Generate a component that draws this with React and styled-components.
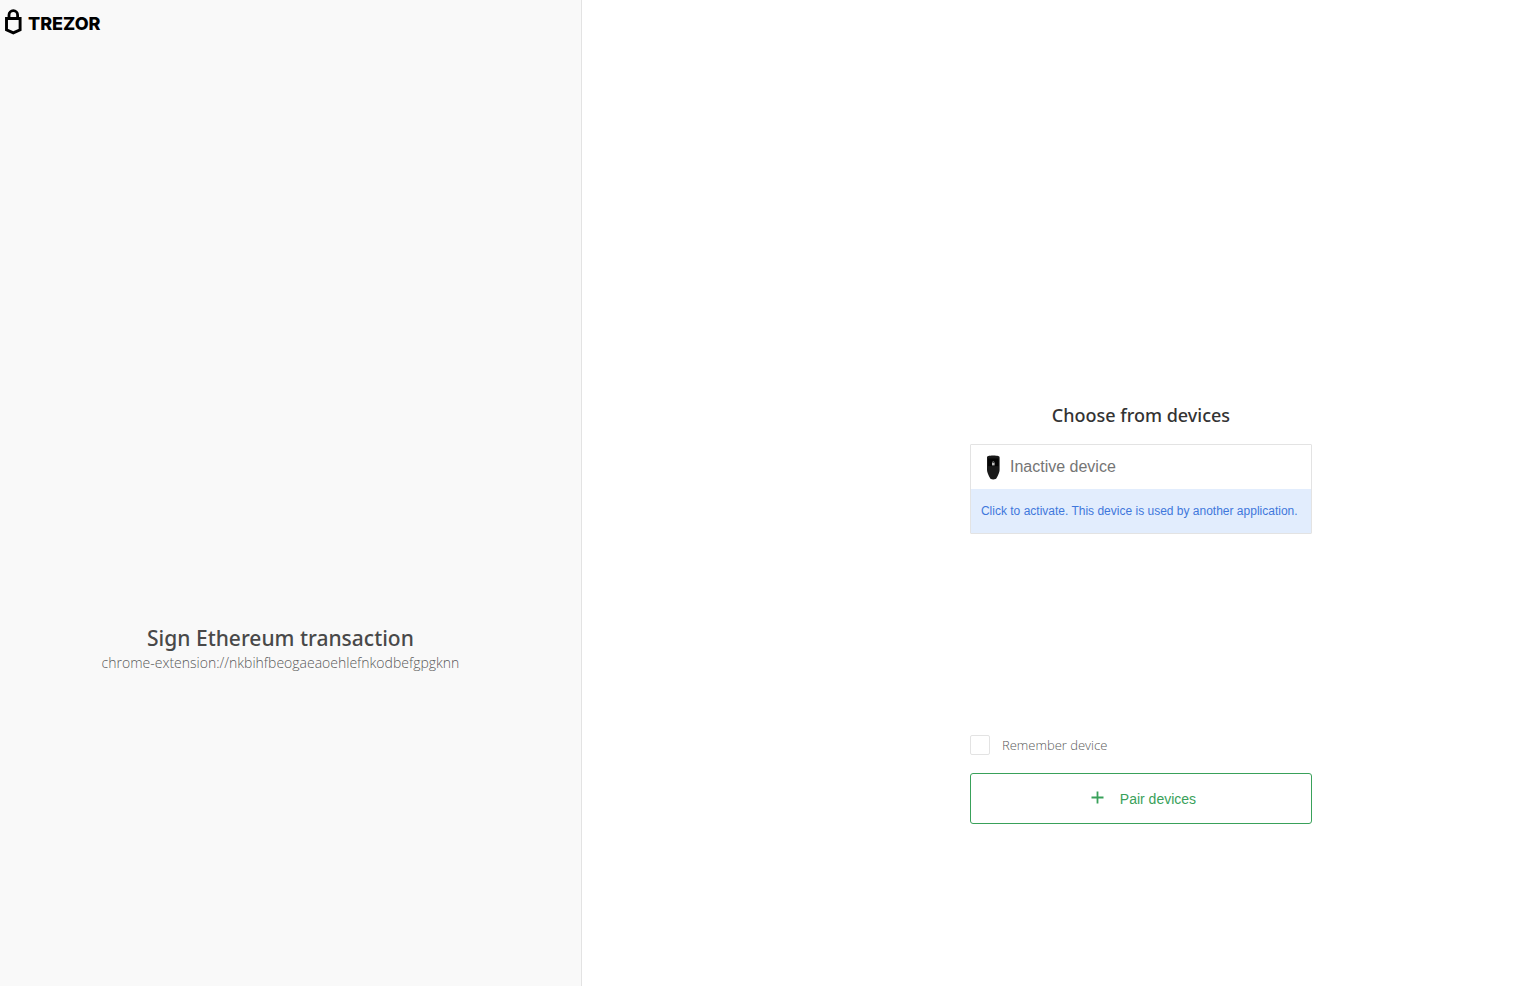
import React, { useState } from 'react';
import styled, { createGlobalStyle, ThemeProvider } from 'styled-components';

const theme = {
  colors: {
    sidebar: '#f9f9f9',
    border: '#e3e3e3',
    heading: '#333333',
    title: '#494949',
    muted: '#757575',
    light: '#5a5a5a',
    green: '#39a15a',
    info: '#3f78dc',
    infoBackground: '#e2edfd',
  },
  fonts: {
    heading: '"Noto Sans", "Open Sans", sans-serif',
    light: '"Open Sans", "Noto Sans", sans-serif',
    body: '"Liberation Sans", Arial, sans-serif',
    logo: 'Inter, sans-serif',
  },
};

const GlobalStyle = createGlobalStyle`
  * {
    box-sizing: border-box;
  }

  body {
    margin: 0;
    background: #ffffff;
    font-family: ${props => props.theme.fonts.body};
  }

  h1, h2, p {
    margin: 0;
  }
`;

const Page = styled.div`
  display: grid;
  grid-template-columns: 28fr 46fr;
  min-height: 100vh;

  @media (max-width: 768px) {
    grid-template-columns: 1fr;
  }
`;

const Sidebar = styled.aside`
  display: flex;
  flex-direction: column;
  background: ${props => props.theme.colors.sidebar};
  border-right: 1px solid ${props => props.theme.colors.border};
`;

const Logo = styled.a`
  display: flex;
  align-items: center;
  align-self: flex-start;
  gap: 6px;
  padding: 9px 0 7px 5px;
  color: #000000;
  font-family: ${props => props.theme.fonts.logo};
  font-size: 18px;
  font-weight: 800;
  line-height: 28px;
  text-decoration: none;

  svg {
    display: block;
    margin-bottom: 4px;
  }
`;

const Operation = styled.div`
  flex: 1;
  display: flex;
  flex-direction: column;
  align-items: center;
  justify-content: center;
  padding: 268px 20px 0 0;
  text-align: center;
`;

const OperationTitle = styled.h1`
  color: ${props => props.theme.colors.title};
  font-family: ${props => props.theme.fonts.heading};
  font-size: 21px;
  font-weight: 500;
  line-height: 26px;
`;

const Origin = styled.p`
  color: ${props => props.theme.colors.light};
  font-family: ${props => props.theme.fonts.light};
  font-size: 14px;
  font-weight: 300;
  line-height: 24px;
`;

const Main = styled.main`
  display: flex;
  align-items: center;
  justify-content: center;
  padding: 240px 0 0 162px;

  @media (max-width: 768px) {
    padding: 40px 20px;
  }
`;

const DevicePicker = styled.section`
  width: 100%;
  max-width: 342px;
`;

const PickerTitle = styled.h2`
  margin-bottom: 16px;
  color: ${props => props.theme.colors.heading};
  font-family: ${props => props.theme.fonts.heading};
  font-size: 18px;
  font-weight: 500;
  line-height: 26px;
  text-align: center;
`;

const DeviceList = styled.div`
  min-height: 291px;
`;

const DeviceButton = styled.button`
  display: block;
  width: 100%;
  padding: 0;
  background: #ffffff;
  border: 1px solid ${props => props.theme.colors.border};
  border-radius: 1px;
  font-family: inherit;
  text-align: left;
  cursor: pointer;
`;

const DeviceName = styled.span`
  display: flex;
  align-items: center;
  gap: 10px;
  height: 44px;
  padding-left: 15px;
  color: ${props => props.theme.colors.muted};
  font-size: 16px;
`;

const DeviceNote = styled.span`
  display: block;
  padding: 0 10px;
  background: ${props => props.theme.colors.infoBackground};
  color: ${props => props.theme.colors.info};
  font-size: 12px;
  line-height: 44px;
`;

const RememberLabel = styled.label`
  display: flex;
  align-items: center;
  gap: 12px;
  margin-bottom: 18px;
  color: ${props => props.theme.colors.light};
  font-family: ${props => props.theme.fonts.light};
  font-size: 13px;
  font-weight: 300;
  line-height: 20px;
  cursor: pointer;
`;

const Checkbox = styled.input`
  appearance: none;
  width: 20px;
  height: 20px;
  margin: 0;
  background: #ffffff;
  border: 1px solid ${props => props.theme.colors.border};
  border-radius: 2px;
  cursor: pointer;

  &:checked {
    background: ${props => props.theme.colors.green};
    border-color: ${props => props.theme.colors.green};
  }
`;

const PairButton = styled.button`
  display: flex;
  align-items: center;
  justify-content: center;
  gap: 16px;
  width: 100%;
  height: 51px;
  padding: 0 0 0 5px;
  background: #ffffff;
  border: 1px solid ${props => props.theme.colors.green};
  border-radius: 3px;
  color: ${props => props.theme.colors.green};
  font-family: inherit;
  font-size: 14px;
  cursor: pointer;
`;

const LockIcon = () => (
  <svg width="17" height="26" viewBox="0 0 17 26" fill="none" stroke="currentColor" aria-hidden="true">
    <path d="M4 9V6a4.3 4.3 0 0 1 8.6 0v3" strokeWidth="2.8" />
    <path d="M1.5 9.5h13.6v11.2l-6.8 3.1-6.8-3.1z" strokeWidth="2.9" />
  </svg>
);

const DeviceIcon = () => (
  <svg width="14" height="25" viewBox="0 0 14 25" aria-hidden="true">
    <path
      d="M1 2.4C1 1.2 2.6.5 7.2.5s6.4.7 6.4 1.9V15c0 2.2-1.5 5.4-3 8-.6 1-1.4 1.4-3.4 1.4S4.500 24 4 23c-1.500-2.600-3-5.800-3-8z"
      fill="#191919"
    />
    <path d="M2 3.500h10.500v7.600H2z" fill="#050505" />
    <path d="M6 7.800h2.600v2.600H6z" fill="#c0c0c0" />
    <path d="M6.500 8v-.7a.8.8 0 0 1 1.600 0V8" fill="none" stroke="#a0a0a0" strokeWidth=".6" />
  </svg>
);

const PlusIcon = () => (
  <svg width="13" height="16" viewBox="0 0 13 16" fill="none" stroke="currentColor" aria-hidden="true">
    <path d="M.5 6.5h12M6.5.5v12" strokeWidth="1.8" />
  </svg>
);

const App = () => {
  const [remember, setRemember] = useState(false);

  return (
    <ThemeProvider theme={theme}>
      <GlobalStyle />
      <Page>
        <Sidebar>
          <Logo href="#">
            <LockIcon />
            TREZOR
          </Logo>
          <Operation>
            <OperationTitle>Sign Ethereum transaction</OperationTitle>
            <Origin>chrome-extension://nkbihfbeogaeaoehlefnkodbefgpgknn</Origin>
          </Operation>
        </Sidebar>
        <Main>
          <DevicePicker>
            <PickerTitle>Choose from devices</PickerTitle>
            <DeviceList>
              <DeviceButton type="button">
                <DeviceName>
                  <DeviceIcon />
                  Inactive device
                </DeviceName>
                <DeviceNote>Click to activate. This device is used by another application.</DeviceNote>
              </DeviceButton>
            </DeviceList>
            <RememberLabel htmlFor="remember">
              <Checkbox
                id="remember"
                type="checkbox"
                checked={remember}
                onChange={event => setRemember(event.target.checked)}
              />
              Remember device
            </RememberLabel>
            <PairButton type="button">
              <PlusIcon />
              Pair devices
            </PairButton>
          </DevicePicker>
        </Main>
      </Page>
    </ThemeProvider>
  );
};

export default App;
